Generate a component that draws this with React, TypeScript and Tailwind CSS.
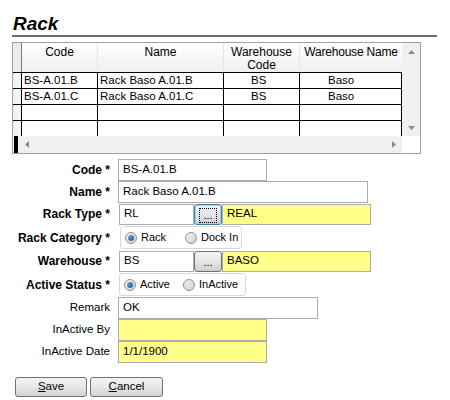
import React from 'react';

const rows = [
  { code: 'BS-A.01.B', name: 'Rack Baso A.01.B', whCode: 'BS', whName: 'Baso' },
  { code: 'BS-A.01.C', name: 'Rack Baso A.01.C', whCode: 'BS', whName: 'Baso' },
  { code: '', name: '', whCode: '', whName: '' },
  { code: '', name: '', whCode: '', whName: '' },
];

function Arrow({ dir }: { dir: 'up' | 'down' | 'left' | 'right' }) {
  const pts = {
    up: '0,4 3.5,0 7,4',
    down: '0,0 3.5,4 7,0',
    left: '4,0 0,3.5 4,7',
    right: '0,0 4,3.5 0,7',
  }[dir];
  const horiz = dir === 'left' || dir === 'right';
  return (
    <svg width={horiz ? 4 : 7} height={horiz ? 7 : 4} viewBox={horiz ? '0 0 4 7' : '0 0 7 4'}>
      <polygon points={pts} fill="#8a8a8a" />
    </svg>
  );
}

function Radio({ checked, label, width }: { checked?: boolean; label: string; width?: string }) {
  return (
    <div className={'flex items-center gap-[4px] ' + (width ?? '')}>
      <div className="w-[12px] h-[12px] rounded-full border border-[#8e8f8f] bg-gradient-to-br from-[#f4f4f4] to-[#cfcfcf] flex items-center justify-center">
        {checked && <div className="w-[6px] h-[6px] rounded-full bg-gradient-to-br from-[#6fb4e8] to-[#14508a]" />}
      </div>
      <span className="text-[11px] leading-none text-black">{label}</span>
    </div>
  );
}

function DotsButton({ focused }: { focused?: boolean }) {
  return (
    <div
      className={
        'w-[28px] h-[21px] rounded-[3px] border bg-gradient-to-b from-[#f3f3f3] via-[#e6e6e6] to-[#cdcdcd] flex items-end justify-center ' +
        (focused ? 'border-[#3c7fb1] shadow-[inset_0_0_0_1px_#a6d3f0]' : 'border-[#707070]')
      }
    >
      <div className={'px-[3px] pb-[1px] text-[11px] leading-[12px] ' + (focused ? 'border border-dotted border-black mb-[1px]' : 'mb-[2px]')}>
        ...
      </div>
    </div>
  );
}

function Label({ text, bold }: { text: string; bold?: boolean }) {
  return (
    <div className={'w-[110px] text-right shrink-0 ' + (bold ? 'font-bold text-[12px]' : 'text-[11.5px]')}>
      {text}
    </div>
  );
}

function TextBox({ value, width, yellow, height = 'h-[22px]' }: { value: string; width: string; yellow?: boolean; height?: string }) {
  return (
    <div
      className={
        width + ' ' + height + ' border border-[#abadb3] flex items-center pl-[4px] text-[11.5px] whitespace-nowrap ' +
        (yellow ? 'bg-[#ffff88]' : 'bg-white')
      }
    >
      {value}
    </div>
  );
}

export default function App() {
  return (
    <div className="w-[450px] h-[400px] bg-white text-black font-['Liberation_Sans',Arial,sans-serif] overflow-hidden">
      {/* Title */}
      <div className="pl-[13px] pt-[13px] h-[35px]">
        <h1 className="text-[19px] leading-[22px] font-bold italic">Rack</h1>
      </div>
      <div className="ml-[12px] w-[425px] h-[2px] bg-[#6b6b6b]" />

      {/* Grid */}
      <div className="ml-[12px] mt-[5px] w-[409px] h-[112px] border border-[#a0a0a0] flex flex-col">
        <div className="flex h-[93px]">
          <div className="w-[389px] flex flex-col">
            {/* header */}
            <div className="flex h-[29px] text-[12px] leading-[13px] bg-gradient-to-b from-white to-[#f0f0f0]">
              <div className="w-[9px] bg-[#ececec] border-r border-[#7a7a7a]" />
              <div className="w-[76px] text-center pt-[3px] border-r border-[#e6e6e6]">Code</div>
              <div className="w-[126px] text-center pt-[3px] border-r border-[#e6e6e6]">Name</div>
              <div className="w-[76px] text-center pt-[3px] border-r border-[#e6e6e6]">
                Warehouse
                <br />
                Code
              </div>
              <div className="w-[102px] text-center pt-[3px] whitespace-nowrap tracking-[-0.2px]">Warehouse Name</div>
            </div>
            {/* body */}
            <div className="border-t border-black">
              {rows.map((r, i) => (
                <div key={i} className="flex h-[16px] border-b border-black text-[11.5px] leading-[15px]">
                  <div className="w-[9px] bg-[#f4f4f4] border-r border-black" />
                  <div className="w-[76px] pl-[2px] border-r border-black whitespace-nowrap">{r.code}</div>
                  <div className="w-[126px] pl-[2px] border-r border-black whitespace-nowrap">{r.name}</div>
                  <div className="w-[76px] pl-[27px] border-r border-black">{r.whCode}</div>
                  <div className="w-[102px] pl-[28px] border-r border-black">{r.whName}</div>
                </div>
              ))}
            </div>
          </div>
          {/* vertical scrollbar */}
          <div className="w-[18px] bg-[#f0f0f0] flex flex-col items-center justify-between pt-[7px] pb-[6px]">
            <Arrow dir="up" />
            <Arrow dir="down" />
          </div>
        </div>
        {/* horizontal scrollbar */}
        <div className="flex h-[17px]">
          <div className="w-[389px] bg-[#f0f0f0] flex items-center">
            <div className="w-[4px] h-[17px] bg-black ml-[1px]" />
            <div className="ml-[7px]">
              <Arrow dir="left" />
            </div>
            <div className="ml-auto mr-[6px]">
              <Arrow dir="right" />
            </div>
          </div>
          <div className="w-[18px] bg-white" />
        </div>
      </div>

      {/* Form */}
      <div className="mt-[5px] flex flex-col">
        <div className="flex items-center h-[22px] gap-[8px]">
          <Label text="Code *" bold />
          <TextBox value="BS-A.01.B" width="w-[149px]" />
        </div>
        <div className="flex items-center h-[22px] gap-[8px]">
          <Label text="Name *" bold />
          <TextBox value="Rack Baso A.01.B" width="w-[250px]" />
        </div>
        <div className="flex items-center h-[22px] gap-[9px]">
          <Label text="Rack Type *" bold />
          <div className="flex items-center">
            <TextBox value="RL" width="w-[75px]" height="h-[21px]" />
            <DotsButton focused />
            <TextBox value="REAL" width="w-[149px]" height="h-[21px]" yellow />
          </div>
        </div>
        <div className="flex items-center h-[25px] gap-[10px]">
          <Label text="Rack Category *" bold />
          <div className="w-[122px] h-[23px] border border-[#d9d9d9] rounded-[3px] flex items-center pl-[4px]">
            <Radio checked label="Rack" width="w-[60px]" />
            <Radio label="Dock In" />
          </div>
        </div>
        <div className="flex items-center h-[22px] gap-[9px]">
          <Label text="Warehouse *" bold />
          <div className="flex items-center">
            <TextBox value="BS" width="w-[75px]" height="h-[21px]" />
            <DotsButton />
            <TextBox value="BASO" width="w-[149px]" height="h-[21px]" yellow />
          </div>
        </div>
        <div className="flex items-center h-[25px] gap-[9px]">
          <Label text="Active Status *" bold />
          <div className="w-[127px] h-[23px] border border-[#d9d9d9] rounded-[3px] flex items-center pl-[4px]">
            <Radio checked label="Active" width="w-[59px]" />
            <Radio label="InActive" />
          </div>
        </div>
        <div className="flex items-center h-[22px] gap-[8px]">
          <Label text="Remark" />
          <TextBox value="OK" width="w-[200px]" />
        </div>
        <div className="flex items-center h-[22px] gap-[8px]">
          <Label text="InActive By" />
          <TextBox value="" width="w-[149px]" yellow />
        </div>
        <div className="flex items-center h-[22px] gap-[8px]">
          <Label text="InActive Date" />
          <TextBox value="1/1/1900" width="w-[149px]" yellow />
        </div>

        {/* Buttons */}
        <div className="flex gap-[3px] ml-[15px] mt-[14px]">
          <button className="w-[72px] h-[20px] rounded-[3px] border border-[#707070] bg-gradient-to-b from-[#f3f3f3] via-[#e8e8e8] to-[#d2d2d2] text-[11.5px] leading-none">
            <span className="underline">S</span>ave
          </button>
          <button className="w-[73px] h-[20px] rounded-[3px] border border-[#707070] bg-gradient-to-b from-[#f3f3f3] via-[#e8e8e8] to-[#d2d2d2] text-[11.5px] leading-none">
            <span className="underline">C</span>ancel
          </button>
        </div>
      </div>
    </div>
  );
}
